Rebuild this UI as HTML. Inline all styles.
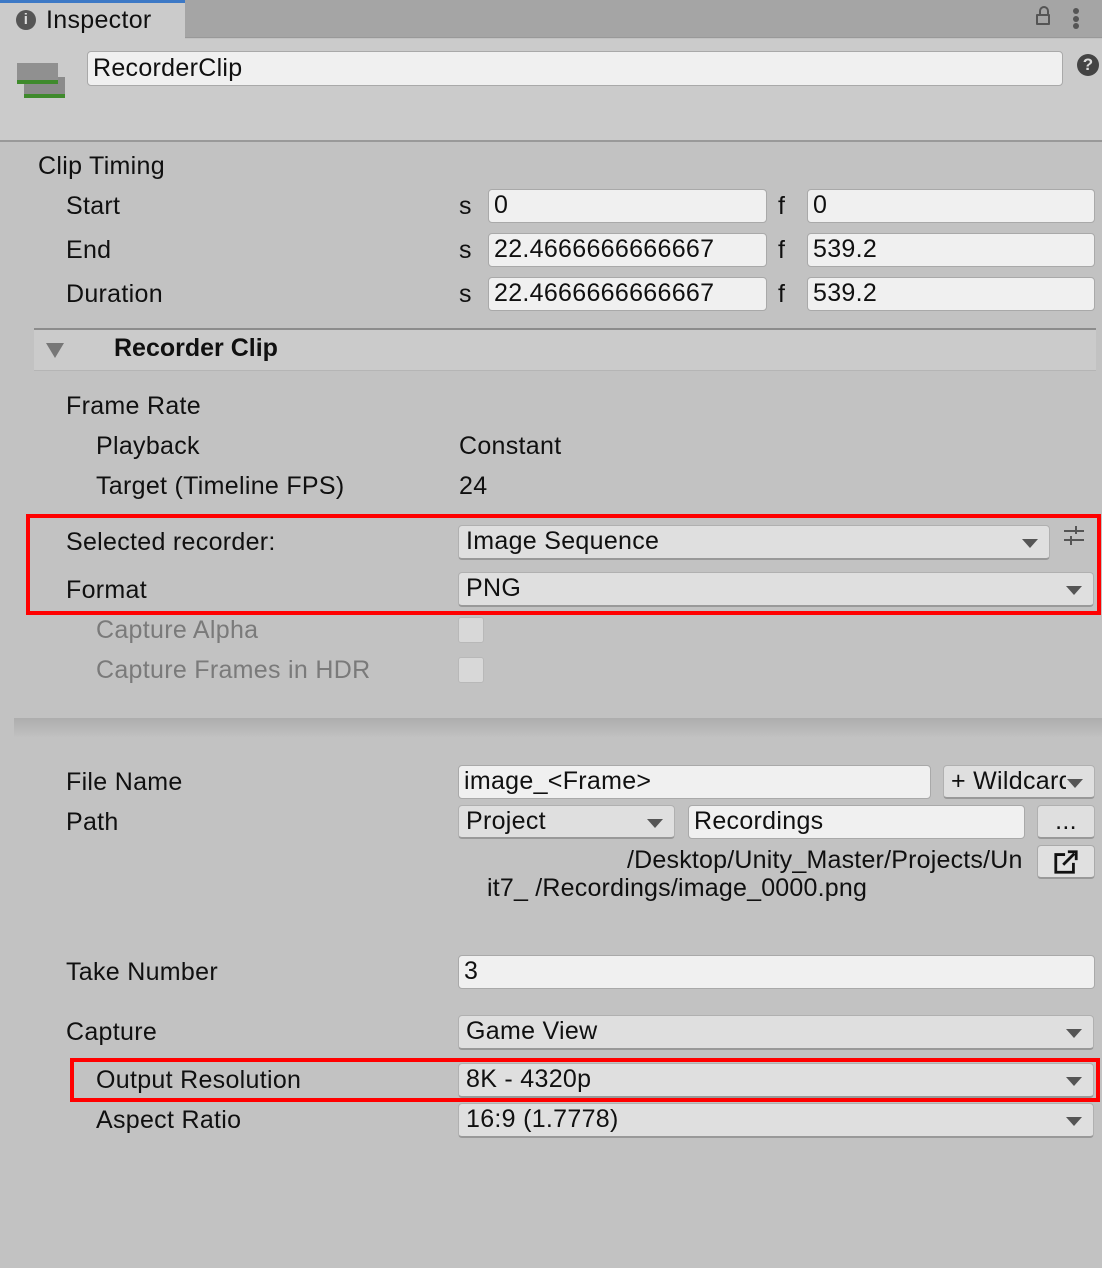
<!DOCTYPE html>
<html><head><meta charset="utf-8"><style>
*{margin:0;padding:0;box-sizing:border-box}
body{width:1102px;height:1268px;background:#c2c2c2;font-family:"Liberation Sans",sans-serif;font-size:25px;letter-spacing:0.3px;color:#101010;position:relative;overflow:hidden}
.a{position:absolute;white-space:nowrap}
.t{position:absolute;white-space:nowrap;line-height:30px}
.fld{position:absolute;background:#f0f0f0;border:1px solid #a9a9a9;border-radius:4px;padding-left:5px;line-height:31px;white-space:nowrap;overflow:hidden}
.dd{position:absolute;background:#dfdfdf;border:1px solid #b0b0b0;border-bottom:2px solid #999;border-radius:4px;padding-left:7px;line-height:31px;white-space:nowrap;overflow:hidden}
.dd:after{content:"";position:absolute;right:11px;top:13px;border-left:8px solid transparent;border-right:8px solid transparent;border-top:9px solid #555}
.dd.n:after{display:none}
.dis{color:#7a7a7a}
.red{position:absolute;border:4px solid #ff0000}
.cb{position:absolute;width:26px;height:26px;background:#d8d8d8;border:1px solid #b8b8b8;border-radius:3px}
</style></head><body>
<div class="a" style="left:0;top:0;width:1102px;height:38px;background:#a5a5a5;border-bottom:1px solid #999"></div>
<div class="a" style="left:0;top:0;width:185px;height:39px;background:#cbcbcb;border-top:3px solid #3d79c6"></div>
<div class="a" style="left:16px;top:10px;width:20px;height:20px;border-radius:50%;background:#555;color:#ddd;font-size:15px;font-weight:bold;text-align:center;line-height:20px">i</div>
<div class="t" style="left:46px;top:5px;font-size:25px">Inspector</div>
<div class="a" style="left:1036px;top:14px;width:14px;height:11px;border:2px solid #555;border-radius:1px"></div>
<div class="a" style="left:1039px;top:6px;width:10px;height:10px;border:2px solid #555;border-bottom:none;border-radius:5px 5px 0 0"></div>
<div class="a" style="left:1073px;top:8px;width:6px;height:6px;border-radius:50%;background:#555"></div>
<div class="a" style="left:1073px;top:16px;width:6px;height:6px;border-radius:50%;background:#555"></div>
<div class="a" style="left:1073px;top:23px;width:6px;height:6px;border-radius:50%;background:#555"></div>
<div class="a" style="left:0;top:39px;width:1102px;height:103px;background:#cbcbcb;border-bottom:2px solid #999"></div>
<div class="a" style="left:24px;top:77px;width:41px;height:21px;background:#8b8b8b;border-bottom:4px solid #3f8a2c"></div>
<div class="a" style="left:17px;top:63px;width:41px;height:21px;background:#909090;border-bottom:4px solid #3f8a2c"></div>
<div class="fld" style="left:87px;top:51px;width:976px;height:35px;line-height:33px">RecorderClip</div>
<div class="a" style="left:1077px;top:54px;width:22px;height:22px;border-radius:50%;background:#444;color:#ddd;font-size:17px;font-weight:bold;text-align:center;line-height:22px;letter-spacing:0">?</div>
<div class="t" style="left:38px;top:151px">Clip Timing</div>
<div class="t" style="left:66px;top:191px">Start</div>
<div class="t" style="left:66px;top:235px">End</div>
<div class="t" style="left:66px;top:279px">Duration</div>
<div class="t" style="left:459px;top:191px">s</div><div class="t" style="left:459px;top:235px">s</div><div class="t" style="left:459px;top:279px">s</div>
<div class="t" style="left:778px;top:191px">f</div><div class="t" style="left:778px;top:235px">f</div><div class="t" style="left:778px;top:279px">f</div>
<div class="fld" style="left:488px;top:189px;width:279px;height:34px">0</div>
<div class="fld" style="left:488px;top:233px;width:279px;height:34px">22.4666666666667</div>
<div class="fld" style="left:488px;top:277px;width:279px;height:34px">22.4666666666667</div>
<div class="fld" style="left:807px;top:189px;width:288px;height:34px">0</div>
<div class="fld" style="left:807px;top:233px;width:288px;height:34px">539.2</div>
<div class="fld" style="left:807px;top:277px;width:288px;height:34px">539.2</div>
<div class="a" style="left:34px;top:328px;width:1062px;height:43px;background:#cbcbcb;border-top:2px solid #8c8c8c;border-bottom:1px solid #b5b5b5"></div>
<div class="a" style="left:46px;top:343px;border-left:9px solid transparent;border-right:9px solid transparent;border-top:15px solid #777"></div>
<div class="t" style="left:114px;top:333px;font-weight:bold;letter-spacing:0">Recorder Clip</div>
<div class="t" style="left:66px;top:391px">Frame Rate</div>
<div class="t" style="left:96px;top:431px">Playback</div>
<div class="t" style="left:96px;top:471px">Target (Timeline FPS)</div>
<div class="t" style="left:459px;top:431px">Constant</div>
<div class="t" style="left:459px;top:471px">24</div>
<div class="t" style="left:66px;top:527px">Selected recorder:</div>
<div class="t" style="left:66px;top:575px">Format</div>
<div class="dd" style="left:458px;top:525px;width:592px;height:35px">Image Sequence</div>
<div class="dd" style="left:458px;top:572px;width:636px;height:35px">PNG</div>
<div class="a" style="left:1064px;top:530px;width:20px;height:2px;background:#555"></div>
<div class="a" style="left:1064px;top:539px;width:20px;height:2px;background:#555"></div>
<div class="a" style="left:1075px;top:526px;width:2px;height:8px;background:#555"></div>
<div class="a" style="left:1070px;top:536px;width:2px;height:9px;background:#555"></div>
<div class="red" style="left:26px;top:514px;width:1075px;height:101px"></div>
<div class="t dis" style="left:96px;top:615px">Capture Alpha</div>
<div class="t dis" style="left:96px;top:655px">Capture Frames in HDR</div>
<div class="cb" style="left:458px;top:617px"></div>
<div class="cb" style="left:458px;top:657px"></div>
<div class="a" style="left:14px;top:718px;width:1088px;height:20px;background:linear-gradient(#adadad,#c2c2c2)"></div>
<div class="t" style="left:66px;top:767px">File Name</div>
<div class="t" style="left:66px;top:807px">Path</div>
<div class="fld" style="left:458px;top:765px;width:473px;height:34px">image_&lt;Frame&gt;</div>
<div class="dd" style="left:943px;top:765px;width:152px;height:34px;padding-left:7px"><span style="display:inline-block;width:115px;overflow:hidden;vertical-align:top">+ Wildcard</span></div>
<div class="dd" style="left:458px;top:805px;width:217px;height:34px">Project</div>
<div class="fld" style="left:688px;top:805px;width:337px;height:34px">Recordings</div>
<div class="dd n" style="left:1037px;top:805px;width:58px;height:34px;padding:0;text-align:center;line-height:30px">...</div>
<div class="t" style="left:627px;top:845px;letter-spacing:0.2px">/Desktop/Unity_Master/Projects/Un</div>
<div class="t" style="left:487px;top:873px;letter-spacing:0.2px">it7_ /Recordings/image_0000.png</div>
<div class="a" style="left:1037px;top:845px;width:58px;height:34px;background:#e0e0e0;border:1px solid #aaa;border-bottom:2px solid #999;border-radius:4px"></div>
<svg class="a" style="left:1053px;top:849px" width="26" height="26" viewBox="0 0 28 28"><path d="M13 6H3v19h19V15" fill="none" stroke="#111" stroke-width="3"/><path d="M11 17L23 5M16 3h9v9" fill="none" stroke="#111" stroke-width="3"/></svg>
<div class="t" style="left:66px;top:957px">Take Number</div>
<div class="fld" style="left:458px;top:955px;width:637px;height:34px">3</div>
<div class="t" style="left:66px;top:1017px">Capture</div>
<div class="dd" style="left:458px;top:1015px;width:636px;height:35px">Game View</div>
<div class="t" style="left:96px;top:1065px">Output Resolution</div>
<div class="dd" style="left:458px;top:1063px;width:636px;height:35px">8K - 4320p</div>
<div class="red" style="left:70px;top:1058px;width:1030px;height:44px"></div>
<div class="t" style="left:96px;top:1105px">Aspect Ratio</div>
<div class="dd" style="left:458px;top:1103px;width:636px;height:35px">16:9 (1.7778)</div>
</body></html>
